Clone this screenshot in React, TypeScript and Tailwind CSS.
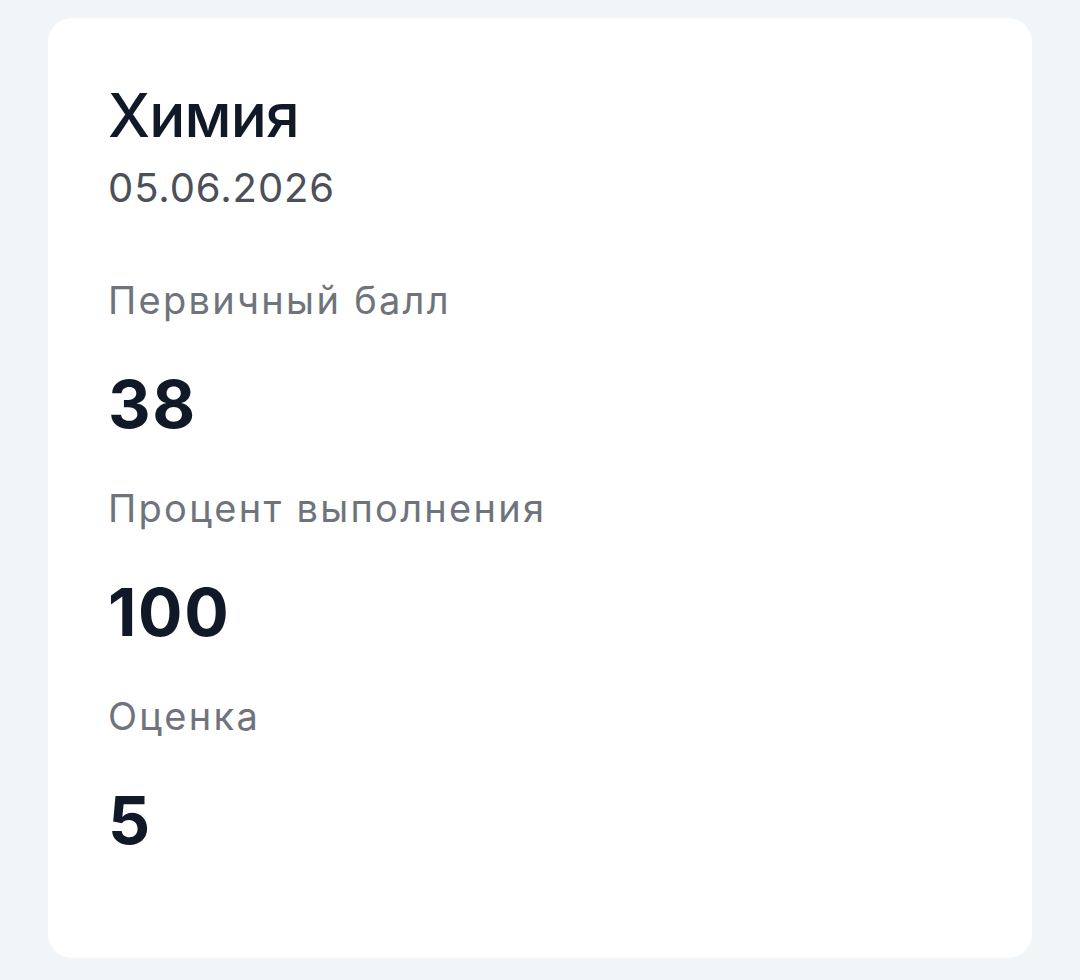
export default function App() {
  const rows = [
    { label: "Первичный балл", value: "38" },
    { label: "Процент выполнения", value: "100" },
    { label: "Оценка", value: "5" },
  ];

  return (
    <div
      className="min-h-[980px] w-full bg-[#f2f5f7] pt-[18px] pl-[48px]"
      style={{ fontFamily: "Inter, 'Noto Sans', sans-serif" }}
    >
      <div className="w-[984px] h-[940px] rounded-[24px] bg-white pl-[60px] pt-[61px]">
        <h1 className="text-[60px] leading-[72px] font-medium tracking-[-0.8px] text-[#111827]">Химия</h1>
        <div className="mt-[13px] text-[40px] leading-[48px] tracking-[0.9px] text-[#4b5059]">05.06.2026</div>

        <div className="mt-[65px] flex flex-col gap-[41px]">
          {rows.map((r) => (
            <div key={r.label} className="flex flex-col gap-[41px]">
              <div className="text-[38px] leading-[46px] tracking-[2.3px] text-[#6f747c]">{r.label}</div>
              <div className="text-[66px] leading-[80px] font-bold tracking-[1.6px] text-[#111827]">{r.value}</div>
            </div>
          ))}
        </div>
      </div>
    </div>
  );
}
